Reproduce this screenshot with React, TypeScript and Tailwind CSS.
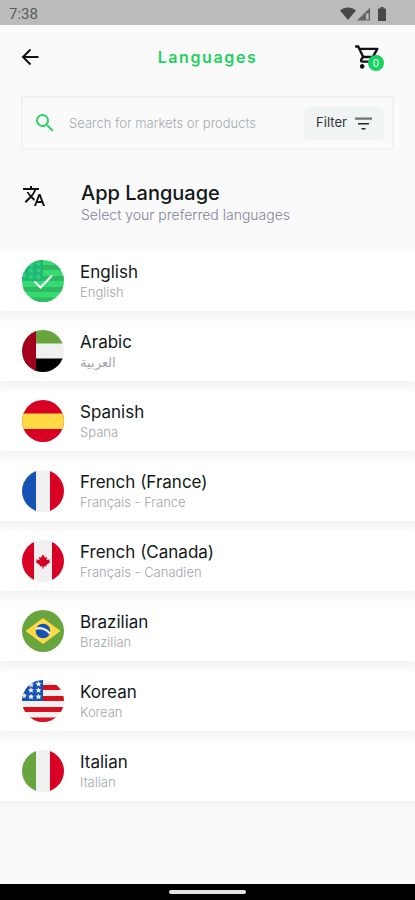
import { useId, useState, type ReactNode } from "react";

function FlagFrame({ children }: { children: ReactNode }) {
  const clip = useId();
  return (
    <svg viewBox="0 0 42 42" className="size-[42px] shrink-0" aria-hidden="true">
      <defs>
        <clipPath id={clip}>
          <circle cx="21" cy="21" r="21" />
        </clipPath>
      </defs>
      <g clipPath={`url(#${clip})`}>{children}</g>
    </svg>
  );
}

function Tricolour({ left, right }: { left: string; right: string }) {
  return (
    <FlagFrame>
      <rect width="42" height="42" fill="#f0f0f0" />
      <rect width="14" height="42" fill={left} />
      <rect x="28" width="14" height="42" fill={right} />
    </FlagFrame>
  );
}

function Stars({ fill }: { fill: string }) {
  const star = "M0-2.9 .9-1 2.9-.9 1.5 .6 1.9 2.6 0 1.6-1.9 2.6-1.5 .6-2.9-.9-.9-1Z";
  const spots = [
    [16.5, 3.8], [9, 4.6], [16.5, 10.2], [9, 10.2], [16.5, 16.6], [9, 16.6], [2, 15.6],
  ];
  return (
    <>
      {spots.map(([x, y]) => (
        <path key={`${x}-${y}`} d={star} fill={fill} transform={`translate(${x} ${y})`} />
      ))}
    </>
  );
}

function StripedFlag() {
  return (
    <FlagFrame>
      <rect width="42" height="42" fill="#f0f0f0" />
      <path d="M0 5h42v5H0zM0 16h42v5H0zM0 27h42v5H0zM0 37.6h42v5H0z" fill="#d80f1e" />
      <rect width="21" height="21" fill="#1452b4" />
      <Stars fill="#f0f0f0" />
    </FlagFrame>
  );
}

function SelectedFlag() {
  return (
    <FlagFrame>
      <rect width="42" height="42" fill="#35da70" />
      <path d="M0 5h42v5H0zM0 16h42v5H0zM0 27h42v5H0zM0 37.6h42v5H0z" fill="#2fb963" />
      <rect width="21" height="21" fill="#1fb873" />
      <Stars fill="#33cf80" />
      <path d="M12.5 21.5 18.5 27.5 30 15.5" fill="none" stroke="#fff" strokeWidth="2" />
    </FlagFrame>
  );
}

function EmiratesFlag() {
  return (
    <FlagFrame>
      <rect width="42" height="42" fill="#f0f0f0" />
      <rect width="42" height="13.5" fill="#68a53f" />
      <rect y="28.5" width="42" height="13.5" fill="#000" />
      <rect width="14" height="42" fill="#a2001d" />
    </FlagFrame>
  );
}

function SpainFlag() {
  return (
    <FlagFrame>
      <rect width="42" height="42" fill="#d80025" />
      <rect y="13.5" width="42" height="15.5" fill="#ffda44" />
    </FlagFrame>
  );
}

function CanadaFlag() {
  return (
    <FlagFrame>
      <rect width="42" height="42" fill="#f0f0f0" />
      <rect width="12" height="42" fill="#d80025" />
      <rect x="30" width="12" height="42" fill="#d80025" />
      <path
        d="M21 14.5 18.8 17.8 16.8 17 17.5 20 14 19.5 14.8 21.3 13.6 22 18 25.2 17.5 26.6 20.4 26.2 20.4 28.5H21.6L21.6 26.2 24.5 26.6 24 25.2 28.4 22 27.2 21.3 28 19.5 24.5 20 25.2 17 23.2 17.8Z"
        fill="#d80025"
      />
    </FlagFrame>
  );
}

function BrazilFlag() {
  return (
    <FlagFrame>
      <rect width="42" height="42" fill="#68a53f" />
      <path d="M21 8 38.5 21 21 34 3.5 21Z" fill="#ffda44" />
      <circle cx="21" cy="21" r="7.3" fill="#1452b4" />
      <path d="M14 18.6c5-1.4 11 .6 14 5" fill="none" stroke="#f0f0f0" strokeWidth="2.2" />
    </FlagFrame>
  );
}

const languages = [
  { id: "en", name: "English", native: "English", flag: <StripedFlag /> },
  { id: "ar", name: "Arabic", native: "العربية", flag: <EmiratesFlag /> },
  { id: "es", name: "Spanish", native: "Spana", flag: <SpainFlag /> },
  { id: "fr-FR", name: "French (France)", native: "Français - France", flag: <Tricolour left="#1452b4" right="#d80025" /> },
  { id: "fr-CA", name: "French (Canada)", native: "Français - Canadien", flag: <CanadaFlag /> },
  { id: "pt-BR", name: "Brazilian", native: "Brazilian", flag: <BrazilFlag /> },
  { id: "ko", name: "Korean", native: "Korean", flag: <StripedFlag /> },
  { id: "it", name: "Italian", native: "Italian", flag: <Tricolour left="#68a53f" right="#d80025" /> },
];

function StatusBar() {
  return (
    <div className="flex h-[25px] items-center justify-between bg-[#bbbbbb] pt-0.5 pr-7 pl-[9px] text-[#5c5c5c]">
      <span className="font-['Roboto',sans-serif] text-[15px] leading-5">7:38</span>
      <svg viewBox="0 0 47 14" className="h-[14px] w-[47px]" fill="#484848" aria-hidden="true">
        <path d="M8 13 0 3.6C4.6-.4 11.4-.4 16 3.6Z" />
        <path d="M17 13.5 30 .8V13.5Z" opacity=".75" />
        <path d="M26 6.5h2.6v6H26z" fill="#bbbbbb" />
        <path d="M40.5 0h3v1.5H46V14h-8V1.5h2.5z" />
      </svg>
    </div>
  );
}

export default function App() {
  const [selected, setSelected] = useState("en");

  return (
    <div className="flex min-h-screen flex-col bg-[#fafafa] font-['Inter','DejaVu_Sans',sans-serif] text-[#111817]">
      <StatusBar />

      <header className="grid h-[63px] grid-cols-[1fr_auto_1fr] items-center px-[18px]">
        <button type="button" aria-label="Back" className="justify-self-start">
          <svg viewBox="0 0 24 24" className="size-6" fill="none" stroke="#111" strokeWidth="2" aria-hidden="true">
            <path d="M20.5 12H5M12.5 4.5 5 12l7.5 7.5" />
          </svg>
        </button>
        <h1 className="text-base font-semibold tracking-widest text-[#1fd15f]">Languages</h1>
        <button type="button" aria-label="Cart, 0 items" className="relative mr-[15px] justify-self-end">
          <svg viewBox="0 0 24 24" className="size-7" fill="#111" aria-hidden="true">
            <path d="M15.55 13c.75 0 1.41-.41 1.75-1.03l3.58-6.49A.996.996 0 0 0 20.01 4H5.21l-.94-2H1v2h2l3.6 7.59-1.35 2.44C4.52 15.37 5.48 17 7 17h12v-2H7l1.1-2h7.45zM6.16 6h12.15l-2.76 5H8.53L6.16 6zM7 18c-1.1 0-1.99.9-1.99 2S5.9 22 7 22s2-.9 2-2-.9-2-2-2z" />
          </svg>
          <span className="absolute -right-0.5 bottom-0 flex size-4 items-center justify-center rounded-full bg-[#12d45e] text-[10px] leading-none text-white">
            0
          </span>
        </button>
      </header>

      <main>
        <form
          role="search"
          onSubmit={(event) => event.preventDefault()}
          className="mx-[21px] mt-2 flex h-[54px] items-center rounded-[3px] border-2 border-[#f0f1f1] pr-2 pl-[10px]"
        >
          <label htmlFor="market-search" className="shrink-0">
            <svg viewBox="0 0 24 24" className="size-6" fill="#27d266" role="img" aria-label="Search">
              <path d="M15.5 14h-.79l-.28-.27A6.47 6.47 0 0 0 16 9.5 6.5 6.5 0 1 0 9.5 16c1.61 0 3.09-.59 4.23-1.57l.27.28v.79l5 4.99L20.49 19l-4.99-5zm-6 0C7.01 14 5 11.99 5 9.5S7.01 5 9.5 5 14 7.01 14 9.5 11.99 14 9.5 14z" />
            </svg>
          </label>
          <input
            id="market-search"
            type="text"
            placeholder="Search for markets or products"
            className="ml-3 h-8 min-w-0 flex-1 bg-transparent text-[13px] font-light outline-none placeholder:text-[#a5a9b0]"
          />
          <button
            type="button"
            className="flex h-[33px] w-20 shrink-0 items-center justify-center gap-2 rounded-[5px] bg-[#f1f4f4] text-[13px] text-[#2f3536]"
          >
            Filter
            <svg viewBox="0 0 17 13" className="h-[13px] w-[17px]" fill="#222b2b" aria-hidden="true">
              <path d="M0 .5h17v2.2H0z" opacity=".65" />
              <path d="M3 6h11v1.6H3zM6.5 11h4v1.6h-4z" />
            </svg>
          </button>
        </form>

        <section className="flex items-start gap-[35px] px-[22px] pt-[31px] pb-[26px]">
          <svg viewBox="0 0 24 24" className="mt-[3px] size-6 shrink-0" fill="#111" aria-hidden="true">
            <path d="m12.87 15.07-2.54-2.51.03-.03A17.52 17.52 0 0 0 14.07 6H17V4h-7V2H8v2H1v1.99h11.17C11.5 7.92 10.44 9.75 9 11.35 8.07 10.32 7.3 9.19 6.69 8h-2c.73 1.63 1.73 3.17 2.98 4.56l-5.09 5.02L4 19l5-5 3.11 3.11.76-2.04zM18.5 10h-2L12 22h2l1.12-3h4.75L21 22h2l-4.5-12zm-2.62 7 1.62-4.33L19.12 17h-3.24z" />
          </svg>
          <div>
            <h2 className="text-xl leading-6 font-medium">App Language</h2>
            <p className="text-sm leading-5 font-light text-[#81859a]">Select your preferred languages</p>
          </div>
        </section>

        <ul className="flex flex-col gap-[10px]">
          {languages.map((language) => (
            <li key={language.id} className="bg-white shadow-[0_4px_6px_rgba(0,0,0,0.03)]">
              <button
                type="button"
                aria-pressed={selected === language.id}
                onClick={() => setSelected(language.id)}
                className="flex h-[60px] w-full items-center gap-4 px-[22px] text-left"
              >
                {selected === language.id ? <SelectedFlag /> : language.flag}
                <span className="flex flex-col">
                  <span className="text-[17px] leading-[22px]">{language.name}</span>
                  <span className="text-[13px] leading-[18px] font-light text-[#a2a4ad]">{language.native}</span>
                </span>
              </button>
            </li>
          ))}
        </ul>
      </main>

      <div className="mt-auto flex h-4 items-center justify-center bg-black">
        <div className="h-1 w-[77px] rounded-full bg-[#e4e4e4]" />
      </div>
    </div>
  );
}
